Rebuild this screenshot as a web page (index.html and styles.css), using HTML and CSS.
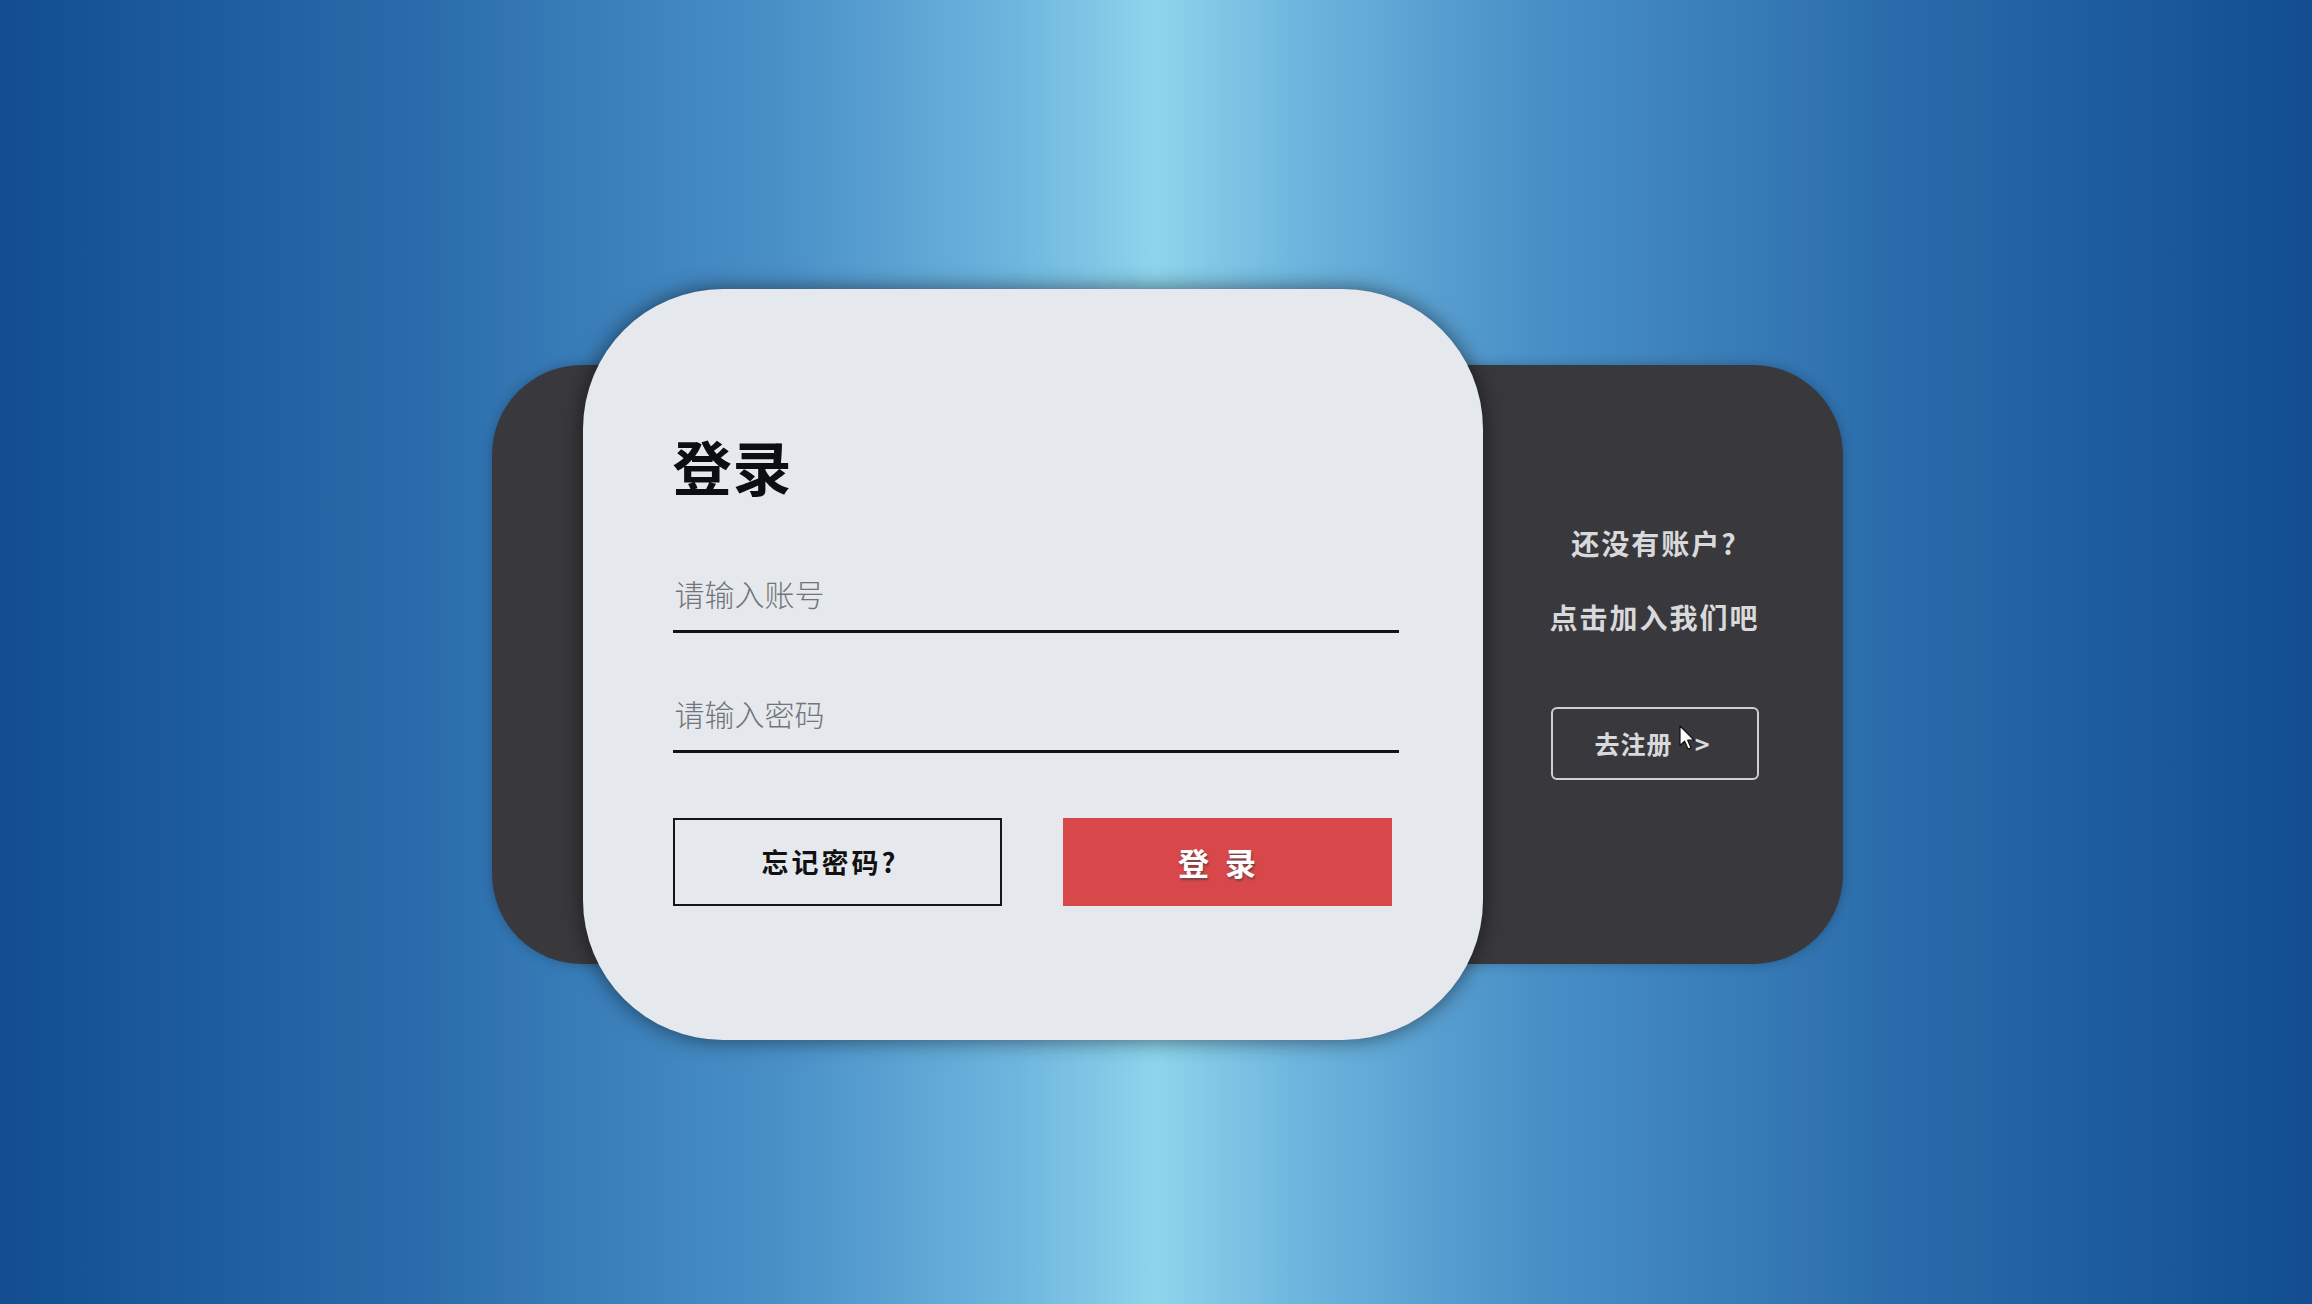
FILE: index.html
```html
<!DOCTYPE html>
<html lang="zh">
<head>
<meta charset="utf-8">
<title>登录</title>
<link rel="stylesheet" href="styles.css">
</head>
<body>
<div class="stage">
  <div class="panel">
    <div class="card">
      <h1 class="title">登录</h1>
      <input class="field" type="text" placeholder="请输入账号">
      <input class="field field-second" type="password" placeholder="请输入密码">
      <div class="actions">
        <button class="btn btn-outline">忘记密码?</button>
        <button class="btn btn-primary">登录</button>
      </div>
    </div>
    <div class="side">
      <p class="side-text">还没有账户?</p>
      <p class="side-text side-text-second">点击加入我们吧</p>
      <button class="btn-register">去注册<span class="arrow">&gt;</span>
        <svg class="cursor" width="18" height="26" viewBox="0 0 18 26"><path d="M1 1 L1 20.5 L5.6 16.2 L9 24 L12 22.7 L8.7 15.2 L15 15.2 Z" fill="#fff" stroke="#111" stroke-width="1.2" stroke-linejoin="round"/></svg>
      </button>
    </div>
  </div>
</div>
</body>
</html>
```
FILE: styles.css
```css
* { box-sizing: border-box; }
html, body { margin: 0; padding: 0; height: 100%; }
body {
  font-family: "Noto Sans CJK SC", "Noto Sans", sans-serif;
  background: linear-gradient(90deg, #114d8f 0%, #2a6cab 18%, #4a91c8 34%, #6fb6df 44%, #8ed5ec 50%, #6fb6df 56%, #4a91c8 66%, #2a6cab 82%, #114d8f 100%);
  overflow: hidden;
}
.stage {
  height: 100vh;
  display: flex;
  align-items: center;
  justify-content: center;
  padding-left: 22px;
  padding-top: 24px;
}
.panel {
  width: 1351px;
  height: 599px;
  background: #39393d;
  border-radius: 90px;
  display: flex;
  align-items: center;
  box-shadow: 0 0 12px rgba(0, 0, 0, 0.25);
}
.card {
  margin-left: 91px;
  width: 900px;
  height: 751px;
  flex: none;
  background: #e5e9ed;
  border-radius: 140px;
  box-shadow: 0 0 22px rgba(0, 0, 0, 0.55);
  padding: 142px 84px 0 90px;
  display: flex;
  flex-direction: column;
}
.title {
  margin: 0;
  font-size: 59px;
  line-height: 70px;
  font-weight: 700;
  color: #0b0f14;
  letter-spacing: 1px;
}
.field {
  display: block;
  width: 726px;
  height: 65px;
  margin-top: 67px;
  padding: 0 2px 12px;
  border: 0;
  border-bottom: 3px solid #111118;
  background: transparent;
  font-family: "Noto Sans CJK SC", "Noto Sans", sans-serif;
  font-size: 30px;
  font-weight: 300;
  color: #333;
  outline: none;
}
.field::placeholder { color: #727479; }
.field-second { margin-top: 55px; }
.actions {
  display: flex;
  gap: 61px;
  margin-top: 65px;
}
.btn {
  width: 329px;
  height: 88px;
  font-family: "Noto Sans CJK SC", "Noto Sans", sans-serif;
  font-weight: 700;
  cursor: pointer;
}
.btn-outline {
  background: transparent;
  border: 2px solid #15151c;
  color: #111;
  font-size: 27px;
  letter-spacing: 3px;
  padding: 0 14px 0 0;
}
.btn-primary {
  background: #d84749;
  border: 0;
  color: #fff;
  font-size: 31px;
  letter-spacing: 16px;
  padding: 0 4px 0 0;
  text-shadow: 1px 2px 2px rgba(60, 60, 60, 0.6);
}
.side {
  flex: 1;
  display: flex;
  flex-direction: column;
  align-items: center;
  padding-right: 16px;
  padding-bottom: 26px;
}
.side-text {
  margin: 0;
  font-size: 28px;
  line-height: 40px;
  font-weight: 700;
  color: #d9d9dc;
  letter-spacing: 2px;
}
.side-text-second { margin-top: 34px; }
.btn-register {
  position: relative;
  margin-top: 70px;
  width: 208px;
  height: 73px;
  padding: 0 4px 0 0;
  background: transparent;
  border: 2px solid #cfcfd2;
  border-radius: 6px;
  color: #d9d9dc;
  font-family: "Noto Sans CJK SC", "Noto Sans", sans-serif;
  font-size: 25px;
  font-weight: 700;
  letter-spacing: 1px;
}
.arrow { margin-left: 22px; }
.cursor {
  position: absolute;
  left: 126px;
  top: 16px;
}
```
